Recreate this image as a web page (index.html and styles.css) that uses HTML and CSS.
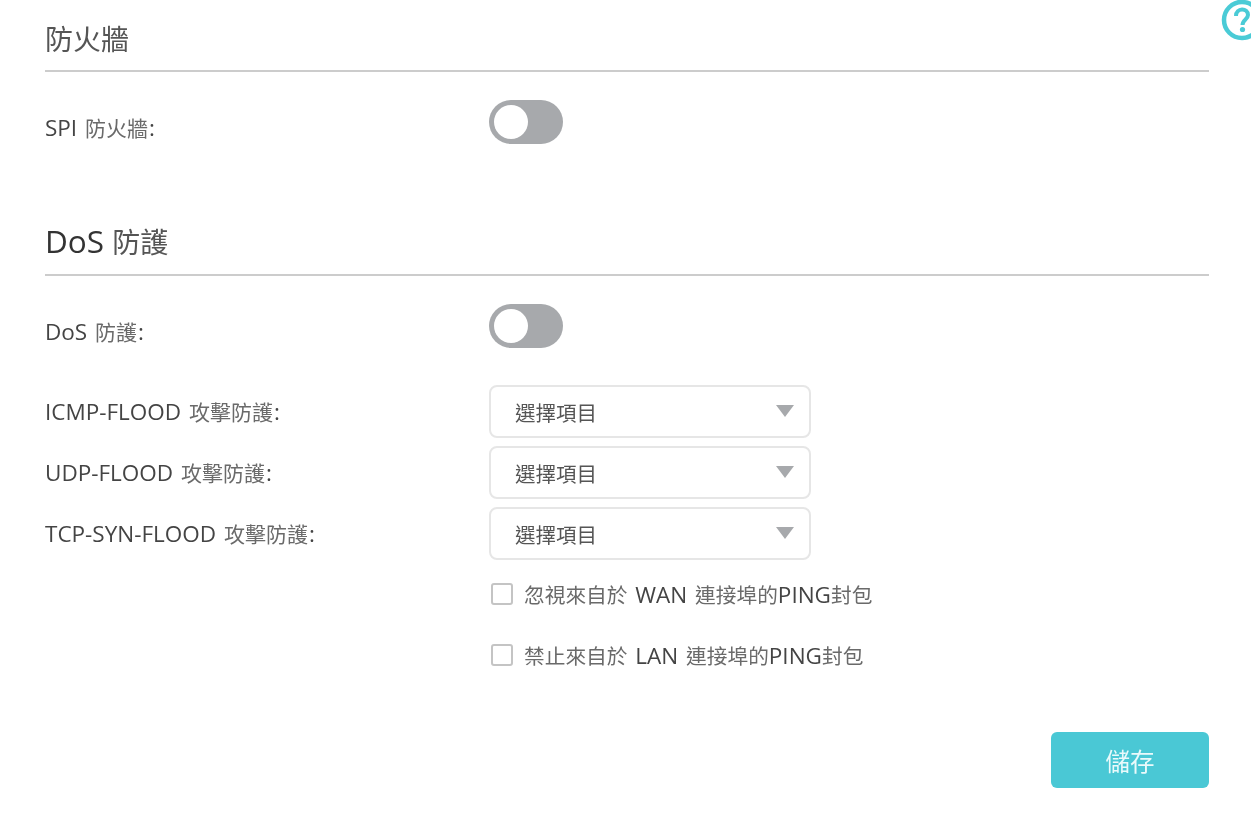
FILE: index.html
```html
<!DOCTYPE html>
<html lang="zh-Hant">
<head>
<meta charset="utf-8">
<title>防火牆</title>
<link rel="stylesheet" href="styles.css">
</head>
<body>
<svg class="help" viewBox="0 0 44 44" width="44" height="44" aria-hidden="true">
  <circle cx="22" cy="22" r="18" fill="none" stroke="#4acbd6" stroke-width="4.5"/>
  <path d="M16 18 C16 9.5 28 9.5 28 17 C28 21.5 22.5 21.5 22.5 27" fill="none" stroke="#4acbd6" stroke-width="4"/>
  <circle cx="22.5" cy="31.5" r="2.6" fill="#4acbd6"/>
</svg>
<main class="page">
  <section class="section first">
    <h2 class="title">防火牆</h2>
    <div class="row toggle-row">
      <div class="label"><span class="lat">SPI </span>防火牆<span class="lat colon">:</span></div>
      <div class="toggle"><span class="knob"></span></div>
    </div>
  </section>
  <section class="section second">
    <h2 class="title"><span class="lat">DoS </span>防護</h2>
    <div class="row toggle-row">
      <div class="label"><span class="lat">DoS </span>防護<span class="lat colon">:</span></div>
      <div class="toggle"><span class="knob"></span></div>
    </div>
    <div class="selects">
      <div class="row">
        <div class="label"><span class="lat">ICMP-FLOOD </span>攻擊防護<span class="lat colon">:</span></div>
        <div class="select"><span>選擇項目</span><i class="caret"></i></div>
      </div>
      <div class="row">
        <div class="label"><span class="lat">UDP-FLOOD </span>攻擊防護<span class="lat colon">:</span></div>
        <div class="select"><span>選擇項目</span><i class="caret"></i></div>
      </div>
      <div class="row">
        <div class="label"><span class="lat">TCP-SYN-FLOOD </span>攻擊防護<span class="lat colon">:</span></div>
        <div class="select"><span>選擇項目</span><i class="caret"></i></div>
      </div>
    </div>
    <div class="checks">
      <div class="check"><span class="box"></span><span class="check-text">忽視來自於<span class="lat"> WAN </span>連接埠的<span class="lat">PING</span>封包</span></div>
      <div class="check"><span class="box"></span><span class="check-text">禁止來自於<span class="lat"> LAN </span>連接埠的<span class="lat">PING</span>封包</span></div>
    </div>
  </section>
  <div class="actions"><button class="save" type="button">儲存</button></div>
</main>
</body>
</html>
```
FILE: styles.css
```css
* { box-sizing: border-box; }
html, body { margin: 0; height: 100%; background: #fff; overflow: hidden; }
body {
  position: relative;
  font-family: "Open Sans", "Noto Sans CJK TC", sans-serif;
  color: #666;
}
.help { position: absolute; left: 1220px; top: -2px; filter: blur(0.4px); }
.page { padding: 0 42px 0 45px; filter: blur(0.35px); }
.lat { font-size: 22.5px; color: #444; word-spacing: 2px; }
.colon { margin-left: 1px; }
.section.first { padding-top: 18px; }
.section.second { margin-top: 76px; }
.title {
  margin: 0;
  height: 54px;
  border-bottom: 2px solid #cccccc;
  font-size: 28px;
  line-height: 42px;
  font-weight: 400;
  color: #555;
}
.title .lat { font-size: 31.5px; color: #333; word-spacing: 0; }
.second .title { height: 56px; }
.row { display: flex; align-items: center; }
.label { width: 444px; font-size: 21px; line-height: 30px; color: #6a6a6a; }
.toggle-row { margin-top: 28px; height: 44px; }
.toggle-row .label { position: relative; top: 6px; }
.toggle {
  width: 74px; height: 44px; border-radius: 22px;
  background: #a7a9ac; padding: 5px;
}
.knob { display: block; width: 34px; height: 34px; border-radius: 50%; background: #fff; }
.selects { margin-top: 37px; display: flex; flex-direction: column; gap: 8px; }
.select {
  width: 322px; height: 53px;
  border: 2px solid #e6e6e6; border-radius: 8px;
  display: flex; align-items: center; justify-content: space-between;
  padding: 0 15px 0 24px;
  font-size: 20.5px; color: #555;
}
.caret {
  width: 0; height: 0; margin-top: -2px;
  border-left: 9px solid transparent; border-right: 9px solid transparent;
  border-top: 12px solid #a7a9ac;
}
.checks { margin-top: 19px; padding-left: 444px; display: flex; flex-direction: column; gap: 31px; }
.check { display: flex; align-items: center; height: 30px; font-size: 20.7px; }
.box {
  width: 22px; height: 22px; margin-left: 2px; margin-right: 11px;
  border: 2px solid #c4c4c4; border-radius: 3px; background: #fff;
}
.check-text { color: #6a6a6a; white-space: nowrap; }
.actions { margin-top: 62px; display: flex; justify-content: flex-end; }
.save {
  width: 158px; height: 56px;
  border: 0; border-radius: 6px;
  background: #4ac8d5; color: #eafafb;
  font: inherit; font-size: 24.5px;
}
```
